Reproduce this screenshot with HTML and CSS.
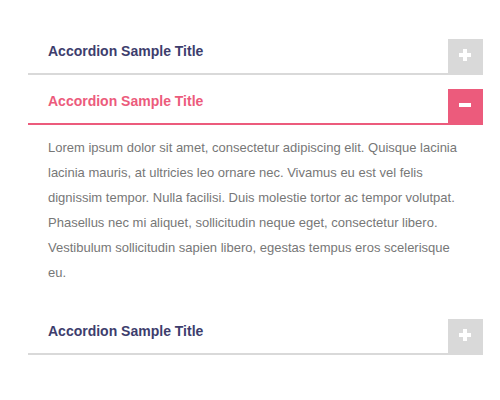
FILE: index.html
```html
<!DOCTYPE html>
<html>
<head>
<meta charset="utf-8">
<link rel="stylesheet" href="styles.css">
</head>
<body>
<div class="accordion">
  <div class="item">
    <div class="head">
      <div class="title">Accordion Sample Title</div>
      <div class="toggle"><span class="plus"></span></div>
    </div>
  </div>
  <div class="item open">
    <div class="head">
      <div class="title">Accordion Sample Title</div>
      <div class="toggle"><span class="minus"></span></div>
    </div>
    <div class="body">Lorem ipsum dolor sit amet, consectetur adipiscing elit. Quisque lacinia lacinia mauris, at ultricies leo ornare nec. Vivamus eu est vel felis dignissim tempor. Nulla facilisi. Duis molestie tortor ac tempor volutpat. Phasellus nec mi aliquet, sollicitudin neque eget, consectetur libero. Vestibulum sollicitudin sapien libero, egestas tempus eros scelerisque eu.</div>
  </div>
  <div class="item">
    <div class="head">
      <div class="title">Accordion Sample Title</div>
      <div class="toggle"><span class="plus"></span></div>
    </div>
  </div>
</div>
</body>
</html>
```
FILE: styles.css
```css
html, body {
  margin: 0;
  padding: 0;
  background: #fff;
}
body {
  font-family: "Liberation Sans", Arial, sans-serif;
}
.accordion {
  width: 455px;
  margin: 39px 0 0 28px;
  display: flex;
  flex-direction: column;
  gap: 14px;
}
.head {
  display: flex;
  height: 36px;
}
.title {
  flex: 1;
  box-sizing: border-box;
  height: 36px;
  padding: 4px 0 0 20px;
  font-size: 14px;
  font-weight: bold;
  line-height: 16px;
  color: #3d3d6d;
  border-bottom: 2px solid #d9d9d9;
}
.toggle {
  position: relative;
  width: 35px;
  height: 36px;
  background: #d9d9d9;
}
.plus::before, .plus::after, .minus::before {
  content: "";
  position: absolute;
  background: #fff;
}
.plus::before {
  left: 11px;
  top: 14px;
  width: 12px;
  height: 4px;
}
.plus::after {
  left: 15px;
  top: 10px;
  width: 4px;
  height: 12px;
}
.minus::before {
  left: 11px;
  top: 14px;
  width: 12px;
  height: 4px;
}
.open .title {
  color: #ec5b7c;
  border-bottom-color: #ec5b7c;
}
.open .toggle {
  background: #ec5b7c;
}
.body {
  padding: 10px 20px 20px 20px;
  font-size: 13px;
  line-height: 25px;
  color: #777;
}
```
